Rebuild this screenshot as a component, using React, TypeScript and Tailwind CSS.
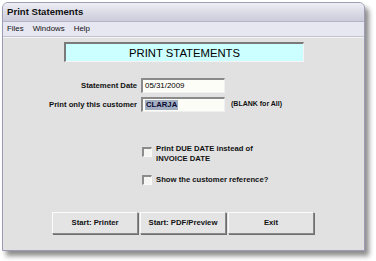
export default function App() {
  const f = { fontFamily: '"Liberation Sans", Arial, sans-serif' };
  return (
    <div className="w-[376px] h-[261px] bg-white overflow-hidden" style={f}>
      <div className="ml-[2px] mt-[2px] w-[363px] h-[249px] border border-[#9c9cb4] rounded-t-[6px] bg-[#e1e1e1] shadow-[4px_5px_5px_rgba(0,0,0,0.45)] flex flex-col overflow-hidden">
        {/* Title bar */}
        <div className="h-[19px] bg-gradient-to-b from-[#eeeef5] to-[#cbcbda] border-b border-[#b4b4c8] px-[4px] flex items-center font-bold text-[9.6px] text-[#111]">
          Print Statements
        </div>
        {/* Menu bar */}
        <div className="h-[15px] bg-[#e7e7f1] border-b border-[#c4c4d0] flex items-center pl-[4px] text-[7.9px] text-[#111]">
          <span>Files</span>
          <span className="ml-[9px]">Windows</span>
          <span className="ml-[9px]">Help</span>
        </div>
        {/* Content */}
        <div className="flex-1 flex flex-col border-t border-[#f4f4f4]">
          <div className="mt-[4px] ml-[61px] w-[240px] h-[20px] bg-[#ccffff] border-t-2 border-l-2 border-b border-r border-t-[#7a7a7a] border-l-[#7a7a7a] border-b-[#f4f4f4] border-r-[#f4f4f4] flex items-start justify-center pt-[1px] text-[11.3px] text-black">
            PRINT STATEMENTS
          </div>

          <div className="mt-[16px] flex items-center">
            <div className="w-[134px] text-right font-bold text-[7.7px] text-[#111]">Statement Date</div>
            <div className="ml-[4px] w-[84px] h-[15px] bg-[#fdfdf7] border-t-2 border-l-2 border-t-[#8a8a8a] border-l-[#8a8a8a] border-b border-r border-b-[#f0f0f0] border-r-[#f0f0f0] flex items-center pl-[2px] text-[7.9px] text-black">
              05/31/2009
            </div>
          </div>
          <div className="mt-[4px] flex items-center">
            <div className="w-[134px] text-right font-bold text-[7.7px] text-[#111]">Print only this customer</div>
            <div className="ml-[4px] w-[84px] h-[15px] bg-[#fdfdf7] border-t-2 border-l-2 border-t-[#8a8a8a] border-l-[#8a8a8a] border-b border-r border-b-[#f0f0f0] border-r-[#f0f0f0] flex items-center pl-[2px]">
              <span className="bg-[#a3aec3] text-[#0a0a30] font-bold text-[7.7px] leading-[10px] px-[1px]">CLARJA</span>
            </div>
            <div className="ml-[6px] font-bold text-[7px] text-[#111]">(BLANK for All)</div>
          </div>

          <div className="mt-[32px] ml-[139px] flex items-start">
            <div className="mt-[3px] w-[10px] h-[10px] bg-[#f6f6f2] border-t-2 border-l-2 border-t-[#8c8c8c] border-l-[#8c8c8c] border-b border-r border-b-[#fafafa] border-r-[#fafafa]" />
            <div className="ml-[4px] font-bold text-[7.7px] leading-[10px] text-[#111]">
              Print DUE DATE instead of
              <br />
              INVOICE DATE
            </div>
          </div>
          <div className="mt-[11px] ml-[139px] flex items-center">
            <div className="w-[10px] h-[10px] bg-[#f6f6f2] border-t-2 border-l-2 border-t-[#8c8c8c] border-l-[#8c8c8c] border-b border-r border-b-[#fafafa] border-r-[#fafafa]" />
            <div className="ml-[4px] font-bold text-[7.7px] leading-[10px] text-[#111]">Show the customer reference?</div>
          </div>

          <div className="mt-[27px] ml-[49px] flex gap-[2px]">
            {["Start: Printer", "Start: PDF/Preview", "Exit"].map((t) => (
              <div
                key={t}
                className="w-[86px] h-[22px] bg-[#e4e4e4] border border-t-[#fbfbfb] border-l-[#fbfbfb] border-b-[#8a8a8a] border-r-[#8a8a8a] shadow-[1px_1px_0_#6e6e6e] flex items-center justify-center font-bold text-[7.7px] text-[#111]"
              >
                {t}
              </div>
            ))}
          </div>
        </div>
      </div>
    </div>
  );
}
